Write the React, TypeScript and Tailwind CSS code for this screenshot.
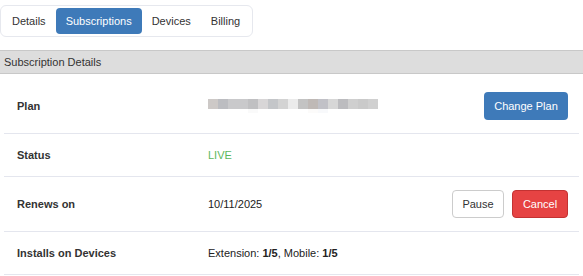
import React from "react";

const blur = [
  "#cdc9c7", "#bcbdc1", "#c9c9cb", "#c9c9cb", "#c0c0c2", "#d8d6d7", "#c4c6c9", "#d3d3d3", "#ebebeb",
  "#c3c3c3", "#bfb9b6", "#c1c1c7", "#d7d7d7", "#bcbcbf", "#cfcfcf", "#cacaca", "#d0d0d0",
];
const blur2 = [
  "#ffffff", "#ffffff", "#ffffff", "#ffffff", "#fafafa", "#ffffff", "#ffffff", "#ffffff", "#ffffff",
  "#ffffff", "#fcfbfa", "#f8f9fb", "#ffffff", "#ffffff", "#ffffff", "#ffffff", "#ffffff",
];

export default function App() {
  return (
    <div
      className="w-[583px] h-[276px] bg-white text-[11px] text-[#333] overflow-hidden"
      style={{ fontFamily: '"Liberation Sans", Arial, sans-serif' }}
    >
      <div className="pt-[5px]">
        <div className="inline-flex items-center h-[32px] border border-[#e6e8ee] rounded-[6px] pl-[1px] pr-[2px]">
          <button className="h-[26px] px-[10px] text-[#333]">Details</button>
          <button className="h-[26px] px-[10px] bg-[#3e7ab9] text-white rounded-[4px]">Subscriptions</button>
          <button className="h-[26px] px-[10px] text-[#333]">Devices</button>
          <button className="h-[26px] px-[10px] text-[#333]">Billing</button>
        </div>
      </div>

      <div className="mt-[13px] h-[24px] bg-[#dddddd] border-t border-b border-[#c8c8c8] flex items-center pl-[4px] text-[#333]">
        Subscription Details
      </div>

      <div className="mx-[4px] w-[575px]">
        <div className="flex items-center pt-[18px] pb-[13px] border-b border-[#e4e6ee]">
          <div className="w-[204px] pl-[13px] font-bold text-[#333]">Plan</div>
          <div className="flex-1">
            <div className="flex">
              {blur.map((c, i) => (
                <div key={i} className="w-[10px] h-[10px]" style={{ backgroundColor: c }} />
              ))}
            </div>
            <div className="flex">
              {blur2.map((c, i) => (
                <div key={i} className="w-[10px] h-[4px]" style={{ backgroundColor: c }} />
              ))}
            </div>
          </div>
          <button className="mr-[11px] h-[28px] w-[84px] bg-[#3e7ab9] text-white rounded-[4px]">
            Change Plan
          </button>
        </div>

        <div className="flex items-center h-[43px] border-b border-[#e4e6ee]">
          <div className="w-[204px] pl-[13px] font-bold text-[#333]">Status</div>
          <div className="text-[#5cb85c]">LIVE</div>
        </div>

        <div className="flex items-center h-[55px] border-b border-[#e4e6ee]">
          <div className="w-[204px] pl-[13px] font-bold text-[#333]">Renews on</div>
          <div className="flex-1 text-[#222]">10/11/2025</div>
          <div className="flex gap-[8px] mr-[11px]">
            <button className="h-[28px] w-[52px] bg-white border border-[#cccccc] rounded-[4px] text-[#333]">
              Pause
            </button>
            <button className="h-[28px] w-[56px] bg-[#e64343] border border-[#c33232] rounded-[4px] text-white">
              Cancel
            </button>
          </div>
        </div>

        <div className="flex items-center h-[43px] border-b border-[#e4e6ee]">
          <div className="w-[204px] pl-[13px] font-bold text-[#333]">Installs on Devices</div>
          <div className="text-[#222]">
            Extension: <b>1/5</b>, Mobile: <b>1/5</b>
          </div>
        </div>
      </div>
    </div>
  );
}
